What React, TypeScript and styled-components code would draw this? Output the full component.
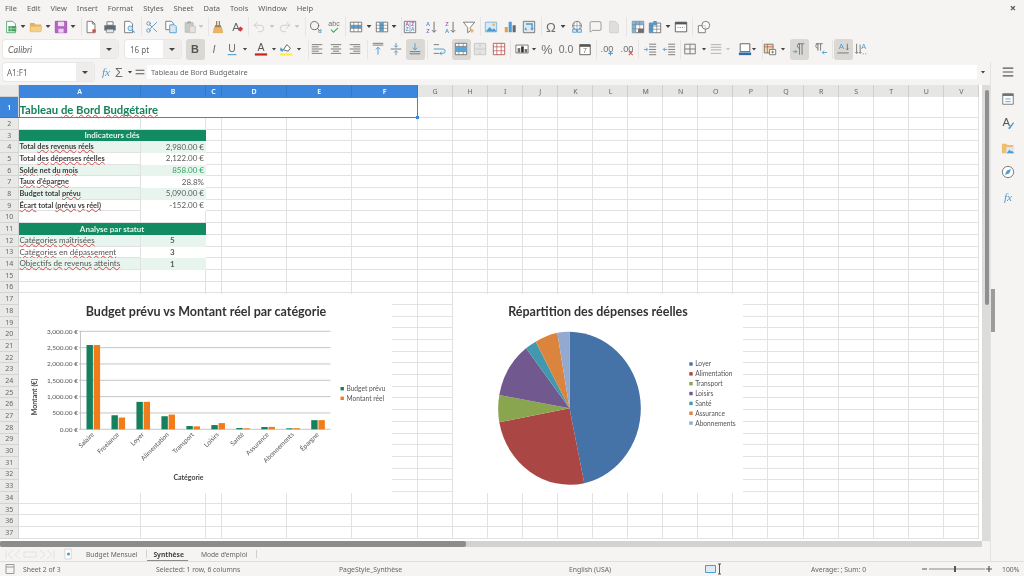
import React from "react";
import styled, { createGlobalStyle } from "styled-components";
import { Scissors, Undo2, Redo2, MessageSquare, Search } from "lucide-react";

const UI = `"Noto Sans", "Open Sans", sans-serif`;
const CELL = `"Lato", "Open Sans", sans-serif`;
const GREY = "#6f6f6f";
const BLUE = "#4f9bd0";

// --- Toolbar icons, all on a 16 unit grid ---

const glyph = (text: string, size: number, color: string, weight = 400, style = "normal", y = 12.5, x = 8) => (
  <text x={x} y={y} textAnchor="middle" fontSize={size} fill={color} fontWeight={weight} fontStyle={style} fontFamily="Liberation Sans, sans-serif">
    {text}
  </text>
);

const lines = (ys: number[], x1: number, x2: number, color = GREY) =>
  ys.map((y, i) => <path key={i} d={`M${x1} ${y}H${x2}`} stroke={color} />);

const ICONS: Record<string, React.ReactNode> = {
  newCalc: (
    <>
      <path d="M3 1.5h7l3 3v10H3z" fill="#fff" stroke="#4ba368" />
      <path d="M5 7h9v6H5z" fill="#3f9d5f" />
      <path d="M8 7v6M5 10h9" stroke="#d5efdc" strokeWidth=".7" />
    </>
  ),
  open: (
    <>
      <path d="M1 3.5h5l1.5 1.5H14v8H1z" fill="#e2b05f" />
      <path d="M1.5 7h13l-1 6.5H1.5z" fill="#f6cf87" stroke="#e6b768" strokeWidth=".6" />
    </>
  ),
  save: (
    <>
      <path d="M1.5 1.5h13v13h-13z" fill="#b566c4" stroke="#a04fb2" />
      <path d="M4.5 2h7v5h-7z" fill="#f0dff3" />
      <path d="M5 10h6v4.5H5z" fill="#e9d4ee" />
    </>
  ),
  template: (
    <>
      <path d="M3.5 1.5h6l3 3v10h-9z" fill="#fff" stroke={GREY} />
      <path d="M9.5 1.5v3h3" stroke={GREY} />
      <circle cx="11.5" cy="12.5" r="2.2" fill="#d9534f" />
    </>
  ),
  print: (
    <>
      <path d="M4.5 2h7v4h-7z" fill="#fff" stroke={GREY} />
      <path d="M1.5 6h13v6h-13z" fill="#5d6b78" />
      <path d="M4 10.5h8v4H4z" fill="#dfe6ec" stroke={GREY} strokeWidth=".7" />
    </>
  ),
  preview: (
    <>
      <path d="M3 1.5h6l3 3v10H3z" fill="#fff" stroke={GREY} />
      <circle cx="9.5" cy="9.5" r="2.7" fill="#cfe6f5" stroke={BLUE} />
      <path d="M11.5 11.5l3 3" stroke={BLUE} strokeWidth="1.3" />
    </>
  ),
  copy: (
    <>
      <path d="M2 1.5h6.5l2 2V11H2z" fill="#fff" stroke={GREY} />
      <path d="M6.5 5.5h5.5l2 2v7H6.5z" fill="#d6e8f5" stroke={BLUE} />
    </>
  ),
  paste: (
    <>
      <path d="M2.5 3h9v11h-9z" fill="#c9c9c7" stroke="#b9b9b7" />
      <path d="M5 1.5h4V4H5z" fill="#a9a9a7" />
      <path d="M7.5 7h6.5v7.5H7.5z" fill="#e3e3e1" stroke="#c4c4c2" />
    </>
  ),
  clone: (
    <>
      <path d="M6.5 1v5M9.5 1v5" stroke="#8a6a3a" strokeWidth="1.2" />
      <path d="M4.5 6h7v2h-7z" fill="#777" />
      <path d="M4 8h8l1.5 6.5h-11z" fill="#eeb461" stroke="#d39745" strokeWidth=".6" />
    </>
  ),
  clear: (
    <>
      {glyph("A", 13, "#5d6b78", 400, "normal", 12, 7)}
      <path d="M9 10l3-2.5 3 2.5-3 3.5z" fill="#d9363e" />
    </>
  ),
  spell: (
    <>
      {glyph("abc", 8, GREY, 400, "normal", 7)}
      <path d="M4.5 11l3 3 5-5" stroke="#45a86e" strokeWidth="1.3" />
    </>
  ),
  rows: (
    <>
      <path d="M1.5 2.5h13v11h-13z" fill="#fff" stroke={GREY} />
      <path d="M1.5 6h13v3.5h-13z" fill="#5aa5d8" />
      <path d="M1.5 6h13M1.5 9.5h13M5.5 2.5v11M10.5 2.5v11" stroke={GREY} strokeWidth=".7" />
    </>
  ),
  cols: (
    <>
      <path d="M1.5 2.5h13v11h-13z" fill="#fff" stroke={GREY} />
      <path d="M5.5 2.5h4v11h-4z" fill="#5aa5d8" />
      <path d="M1.5 6h13M1.5 9.5h13M5.5 2.5v11M9.5 2.5v11" stroke={GREY} strokeWidth=".7" />
    </>
  ),
  sort: (
    <>
      <path d="M1.5 1.5h13v13h-13z" fill="#eef3f7" stroke={GREY} />
      <path d="M8 1.5v13" stroke={GREY} strokeWidth=".6" />
      {glyph("A", 5.5, "#a04fb2", 700, "normal", 7, 4.8)}
      {glyph("Z", 5.5, BLUE, 700, "normal", 13, 4.8)}
      {glyph("Z", 5.5, "#a04fb2", 700, "normal", 7, 11.2)}
      {glyph("A", 5.5, BLUE, 700, "normal", 13, 11.2)}
    </>
  ),
  sortAsc: (
    <>
      {glyph("A", 6.5, BLUE, 700, "normal", 7, 4.5)}
      {glyph("Z", 6.5, "#a06cc0", 700, "normal", 14.5, 4.5)}
      <path d="M11.5 2v12M9 11.5l2.5 2.5 2.5-2.5" stroke={GREY} strokeWidth="1.1" />
    </>
  ),
  sortDesc: (
    <>
      {glyph("Z", 6.5, "#a06cc0", 700, "normal", 7, 4.5)}
      {glyph("A", 6.5, BLUE, 700, "normal", 14.5, 4.5)}
      <path d="M11.5 2v12M9 11.5l2.5 2.5 2.5-2.5" stroke={GREY} strokeWidth="1.1" />
    </>
  ),
  filter: (
    <>
      <path d="M1.5 2.5h13L9.5 8.5v4l-3 2V8.5z" fill="#fff" stroke={GREY} />
      <path d="M9 9l5 3-3 3z" fill="#eeb461" />
    </>
  ),
  image: (
    <>
      <path d="M1.5 2.5h13v11h-13z" fill="#d6e9f6" stroke="#7fb2d6" />
      <path d="M2 13l4.5-5 3 3 2-1.5 3 3.5z" fill={BLUE} />
      <circle cx="11" cy="5.5" r="1.5" fill="#efb45e" />
    </>
  ),
  chart: (
    <>
      <path d="M2 8h3.5v6H2z" fill="#e8a13d" />
      <path d="M6.5 2h3.5v12H6.5z" fill={BLUE} />
      <path d="M11 6h3.5v8H11z" fill="#5d6b78" />
    </>
  ),
  pivot: (
    <>
      <path d="M1.5 1.5h13v13h-13z" fill="#dfe7ee" stroke={GREY} />
      <path d="M4.5 4.5h7v7" stroke={BLUE} strokeWidth="1.6" />
      <path d="M9.5 9.5l2 2.5 2-2.5" fill={BLUE} />
      <path d="M4 8l-1 3 3 1z" fill={BLUE} />
    </>
  ),
  omega: glyph("Ω", 15, GREY, 400, "normal", 13.5),
  link: (
    <>
      <circle cx="8" cy="6.5" r="5" fill="#fff" stroke={GREY} />
      <path d="M3 6.5h10M8 1.5v10M5.5 2.5c-1.5 2.5-1.5 5.5 0 8M10.5 2.5c1.5 2.5 1.5 5.5 0 8" stroke={GREY} strokeWidth=".6" />
      <path d="M3 10.5h4.5v3.5H3zM8.5 10.5H13v3.5H8.5z" fill="#d6e8f5" stroke={BLUE} />
    </>
  ),
  note: <path d="M3 1.5h6.5l3.5 3.5v9.5H3z" fill="#dedede" stroke="#cfcfcf" />,
  freeze: (
    <>
      <path d="M1.5 1.5h13v13h-13z" fill="#fff" stroke={GREY} />
      <path d="M1.5 1.5h13v4h-13zM1.5 5.5h4v9h-4z" fill="#7db6dd" />
      <path d="M1.5 5.5h13M5.5 1.5v13M10 1.5v13M1.5 10h13" stroke={GREY} strokeWidth=".6" />
      <path d="M8 10h6.5v4.5H8z" fill="#6f6f6f" />
    </>
  ),
  split: (
    <>
      <path d="M1.5 3.5h13v11h-13z" fill="#fff" stroke={GREY} />
      <path d="M1.5 3.5h4.5v11H1.5zM6 1h4v5H6z" fill={BLUE} />
      <path d="M1.5 7h13M1.5 10.5h13M10 3.5v11" stroke={GREY} strokeWidth=".7" />
    </>
  ),
  header: (
    <>
      <path d="M1.5 2.5h13v11h-13z" fill="#fff" stroke="#555" />
      <path d="M1.5 2.5h13v2.5h-13z" fill="#555" />
      <path d="M4 8.5h8" stroke={BLUE} strokeDasharray="1.5 1" />
    </>
  ),
  shapes: (
    <>
      <path d="M1.5 6.5h8v8h-8z" fill="#fff" stroke={GREY} />
      <circle cx="10" cy="6" r="4.5" fill="#fff" fillOpacity=".6" stroke={GREY} />
    </>
  ),
  bold: glyph("B", 12.5, "#555", 700),
  italic: glyph("I", 12.5, GREY, 400, "italic"),
  underline: (
    <>
      {glyph("U", 12, GREY, 400, "normal", 11.5)}
      <path d="M3 14.5h10" stroke={BLUE} strokeWidth="1.2" />
    </>
  ),
  fontColor: (
    <>
      {glyph("A", 12, "#555", 400, "normal", 10.5)}
      <path d="M1 13h14v2.5H1z" fill="#c9211e" />
    </>
  ),
  highlight: (
    <>
      <path d="M5 9l4-6 4 4-2.5 3.5z" fill="#fff" stroke="#555" />
      <path d="M2 6l3 3-1 2.5-3-2z" fill={BLUE} />
      <path d="M1 13h14v2.5H1z" fill="#ffee3a" />
    </>
  ),
  alignLeft: <>{lines([3, 8, 13], 2, 14)}{lines([5.5, 10.5], 2, 10)}</>,
  alignCenter: <>{lines([3, 8, 13], 2, 14)}{lines([5.5, 10.5], 4.5, 11.5)}</>,
  alignRight: <>{lines([3, 8, 13], 2, 14)}{lines([5.5, 10.5], 6, 14)}</>,
  alignTop: (
    <>
      {lines([1.5, 3.5], 2, 14)}
      <path d="M8 14.5V6M5.5 8.5L8 6l2.5 2.5" stroke={BLUE} strokeWidth="1.1" />
    </>
  ),
  alignMiddle: (
    <>
      {lines([8], 2, 14)}
      <path d="M8 1v5M6 4l2 2 2-2M8 15v-5M6 12l2-2 2 2" stroke={BLUE} strokeWidth="1.1" />
    </>
  ),
  alignBottom: (
    <>
      {lines([11, 13.5], 2, 14)}
      <path d="M8 1.5V9M5.5 6.5L8 9l2.5-2.5" stroke={BLUE} strokeWidth="1.1" />
    </>
  ),
  wrap: (
    <>
      {lines([3, 13], 2, 8)}
      <path d="M2 8h10.5a2.2 2.2 0 010 5H9M11 11l-2 2 2 2" stroke={BLUE} strokeWidth="1.1" />
    </>
  ),
  merge: (
    <>
      <path d="M1.5 1.5h13v13h-13z" fill="#fff" stroke={GREY} />
      <path d="M1.5 5h13v6h-13z" fill="#5aa5d8" />
      <path d="M1.5 5h13M1.5 11h13M5.5 1.5V5M10.5 1.5V5M5.5 11v3.5M10.5 11v3.5" stroke={GREY} strokeWidth=".7" />
    </>
  ),
  mergeGrey: (
    <>
      <path d="M1.5 1.5h13v13h-13z" fill="#e4e4e2" stroke="#c4c4c2" />
      <path d="M1.5 8h13M8 1.5v4M8 11v3.5" stroke="#c4c4c2" />
    </>
  ),
  unmerge: (
    <>
      <path d="M1.5 1.5h13v13h-13z" fill="#fff" stroke="#b5534c" />
      <path d="M1.5 5.5h13M1.5 10h13M5.5 1.5v13M10.5 1.5v13" stroke="#b5534c" strokeWidth=".8" />
    </>
  ),
  currency: (
    <>
      <path d="M1 3.5h14v9H1z" fill="#fff" stroke={GREY} />
      <path d="M3 7h3v5H3z" fill={GREY} />
      <path d="M7 5h3v7H7z" fill="#333" />
      <path d="M11 8h3v4h-3z" fill={GREY} />
    </>
  ),
  percent: glyph("%", 14.5, GREY, 400, "normal", 13.5),
  number: glyph("0.0", 12, GREY, 400, "normal", 12.5),
  date: (
    <>
      <path d="M2 3h12v11.5H2z" fill="#fff" stroke="#555" />
      <path d="M2 3h12v2.5H2z" fill="#555" />
      {glyph("7", 8, GREY, 400, "normal", 13)}
    </>
  ),
  addDec: (
    <>
      {glyph(".00", 10.5, GREY, 400, "normal", 11)}
      <path d="M12 10.5v5M9.5 13h5" stroke={BLUE} strokeWidth="1.2" />
    </>
  ),
  delDec: (
    <>
      {glyph(".00", 10.5, GREY, 400, "normal", 11)}
      <path d="M10 10.5l4.5 4.5M14.5 10.5L10 15" stroke="#d9534f" strokeWidth="1.2" />
    </>
  ),
  indentMore: (
    <>
      {lines([2.5, 5.5, 8.5, 11.5, 14.5], 7, 15)}
      <path d="M1 8.5h4M3.5 6.5l2 2-2 2" stroke={BLUE} />
    </>
  ),
  indentLess: (
    <>
      {lines([2.5, 5.5, 8.5, 11.5, 14.5], 7, 15)}
      <path d="M6 8.5H1.5M3.5 6.5l-2 2 2 2" stroke={BLUE} />
    </>
  ),
  borders: <path d="M2 2.5h12v11H2zM8 2.5v11M2 8h12" stroke={GREY} />,
  borderStyle: <>{lines([3, 6, 9, 13], 2, 14, "#a8a8a6")}</>,
  borderColor: (
    <>
      <path d="M2.5 2h11v9h-11z" fill="#fff" stroke="#555" />
      <path d="M1 12h14v3H1z" fill="#2f6ba8" />
    </>
  ),
  conditional: (
    <>
      <path d="M1.5 2.5h10v10h-10z" fill="#f3d9b0" stroke={GREY} />
      <path d="M1.5 5.5h10M5 2.5v10" stroke="#b5534c" strokeWidth=".8" />
      <path d="M7.5 8.5h7v6h-7z" fill="#fff" stroke={GREY} />
      <path d="M9.5 11.5h3M11 10v3" stroke={GREY} />
    </>
  ),
  ltr: (
    <>
      <path d="M7 2h7M8.5 2v12.5M11.5 2v12.5M8.5 2C5.5 2 5 7 8.5 7" stroke={GREY} />
      <path d="M1 11h4.5M3.5 9l2 2-2 2" stroke={BLUE} />
    </>
  ),
  rtl: (
    <>
      <path d="M2 2h8M4.5 2v8M7.5 2v8M4.5 2C1.5 2 1 7 4.5 7" stroke={GREY} />
      <path d="M15 12H9.5M11.5 10l-2 2 2 2" stroke={BLUE} />
    </>
  ),
  textHoriz: (
    <>
      {glyph("A", 9, BLUE, 400, "normal", 8, 6)}
      <path d="M13 2v7M11.5 7.5l1.5 1.5 1.5-1.5M1.5 12.5h13" stroke={GREY} />
    </>
  ),
  textVert: (
    <>
      {glyph("A", 8.5, BLUE, 400, "normal", 8, 11)}
      <path d="M3 2v11M1.5 11.5l1.5 1.5 1.5-1.5M7 3v10M5.5 11.5L7 13l1.5-1.5" stroke={GREY} />
      <path d="M10 13.5h1M13 13.5h1" stroke={GREY} />
    </>
  ),
  fx: (
    <text x="8" y="12.5" textAnchor="middle" fontSize="13" fontStyle="italic" fill={BLUE} fontFamily="Liberation Serif, serif">
      fx
    </text>
  ),
  sum: glyph("Σ", 14.5, GREY, 400, "normal", 13.5),
  equals: <path d="M3 6h10M3 10h10" stroke="#555" strokeWidth="1.4" />,
  cut: <Scissors size={16} color="#5a93bd" strokeWidth={1.5} />,
  undo: <Undo2 size={16} color="#c6c6c4" strokeWidth={1.4} />,
  redo: <Redo2 size={16} color="#c6c6c4" strokeWidth={1.4} />,
  find: (
    <>
      <Search x={0} y={0} size={14} color="#555" strokeWidth={1.6} />
      {glyph("d", 7, BLUE, 700, "normal", 15, 12.5)}
    </>
  ),
  comment: <MessageSquare size={15} color={GREY} strokeWidth={1.2} />,
};

type ToolItem = [name: string, center: number, active?: boolean];

const TOP_TOOLS: ToolItem[] = [
  ["newCalc", 11], ["caret", 23], ["open", 36], ["caret", 48], ["save", 61], ["caret", 73], ["sep", 81],
  ["template", 91], ["print", 110], ["preview", 129], ["sep", 141],
  ["cut", 152], ["copy", 171], ["paste", 190], ["caretOff", 201], ["sep", 208],
  ["clone", 218], ["clear", 237], ["sep", 248],
  ["undo", 259], ["caretOff", 272], ["redo", 285], ["caretOff", 297], ["sep", 305],
  ["find", 316], ["spell", 334], ["sep", 345],
  ["rows", 356], ["caret", 369], ["cols", 382], ["caret", 394], ["sep", 401],
  ["sort", 410], ["sortAsc", 431], ["sortDesc", 450], ["filter", 469], ["sep", 480],
  ["image", 491], ["chart", 510], ["pivot", 529], ["sep", 541],
  ["omega", 551], ["caret", 563], ["link", 577], ["comment", 596], ["note", 614], ["sep", 626],
  ["freeze", 638], ["split", 655], ["caret", 668], ["header", 681], ["sep", 692],
  ["shapes", 704],
];

const FORMAT_TOOLS: ToolItem[] = [
  ["bold", 195, true], ["italic", 214], ["underline", 232], ["caret", 245],
  ["fontColor", 261], ["caret", 274], ["highlight", 286], ["caret", 299], ["sep", 308],
  ["alignLeft", 317], ["alignCenter", 336], ["alignRight", 355], ["sep", 367],
  ["alignTop", 378], ["alignMiddle", 396], ["alignBottom", 415, true], ["sep", 427],
  ["wrap", 439], ["merge", 461, true], ["mergeGrey", 480], ["unmerge", 499], ["sep", 510],
  ["currency", 522], ["caret", 534], ["percent", 547], ["number", 566], ["date", 585], ["sep", 596],
  ["addDec", 607], ["delDec", 627], ["sep", 638],
  ["indentMore", 650], ["indentLess", 669], ["sep", 680],
  ["borders", 690], ["caret", 704], ["borderStyle", 716], ["caretOff", 728], ["borderColor", 745], ["caret", 754], ["sep", 762],
  ["conditional", 770], ["caret", 783], ["sep", 791],
  ["ltr", 799, true], ["rtl", 821], ["sep", 832],
  ["textHoriz", 843, true], ["textVert", 861],
];

const itemWidth = (name: string) => (name === "sep" ? 1 : name.startsWith("caret") ? 5 : 19);

// each item sits at its center, the margin is what is left after the previous one
const Tools = ({ items, from = 0 }: { items: ToolItem[]; from?: number }) => {
  let right = from;
  return (
    <>
      {items.map(([name, center, active], i) => {
        const w = itemWidth(name);
        const gap = center - w / 2 - right;
        right = center + w / 2;
        if (name === "sep") return <ToolSep key={i} $gap={gap} />;
        if (name.startsWith("caret")) return <Caret key={i} $gap={gap} $off={name === "caretOff"} />;
        return (
          <Tool key={i} $gap={gap} $active={active}>
            <ToolSvg viewBox="0 0 16 16" fill="none">
              {ICONS[name]}
            </ToolSvg>
          </Tool>
        );
      })}
    </>
  );
};

// --- Sheet data ---

const COLUMNS = "ABCDEFGHIJKLMNOPQRSTUV".split("");
const ROW_COUNT = 37;

type KeyRow = { label: string; value: string; shaded?: boolean; strong?: boolean; center?: boolean; positive?: boolean };

const KEY_ROWS: Record<number, KeyRow> = {
  4: { label: "Total ~des ~revenus ~réels", value: "2,980.00 €", shaded: true, strong: true },
  5: { label: "Total ~des ~dépenses ~réelles", value: "2,122.00 €", strong: true },
  6: { label: "~Solde net ~du ~mois", value: "858.00 €", shaded: true, strong: true, positive: true },
  7: { label: "~Taux ~d'épargne", value: "28.8%", strong: true },
  8: { label: "Budget total ~prévu", value: "5,090.00 €", shaded: true, strong: true },
  9: { label: "~Écart total ~(prévu ~vs ~réel)", value: "-152.00 €", strong: true },
  12: { label: "~Catégories ~maîtrisées", value: "5", shaded: true, center: true },
  13: { label: "~Catégories en ~dépassement", value: "3", center: true },
  14: { label: "~Objectifs ~de ~revenus ~atteints", value: "1", shaded: true, center: true },
};

const BANDS: Record<number, string> = { 3: "Indicateurs clés", 11: "Analyse par statut" };

// words with a ~ get the red spell check line
const marked = (text: string) =>
  text.split(" ").map((word, i) => (
    <React.Fragment key={i}>
      {i > 0 && " "}
      {word.startsWith("~") ? <Misspelled>{word.slice(1)}</Misspelled> : word}
    </React.Fragment>
  ));

const renderRow = (row: number) => {
  const head = (
    <RowHead key={`h${row}`} $selected={row === 1}>
      {row}
    </RowHead>
  );
  const rest = (from: number) =>
    COLUMNS.slice(from).map((c) => <Cell key={`${c}${row}`} />);

  if (row === 1) {
    return [head, <TitleCell key="title">{marked("Tableau ~de ~Bord ~Budgétaire")}</TitleCell>, ...rest(6)];
  }
  if (BANDS[row]) {
    return [head, <BandCell key={`b${row}`}>{BANDS[row]}</BandCell>, ...rest(2)];
  }
  const data = KEY_ROWS[row];
  if (data) {
    return [
      head,
      <LabelCell key={`a${row}`} $shaded={data.shaded} $strong={data.strong}>
        {marked(data.label)}
      </LabelCell>,
      <ValueCell key={`v${row}`} $shaded={data.shaded} $center={data.center} $positive={data.positive}>
        {data.value}
      </ValueCell>,
      ...rest(2),
    ];
  }
  return [head, ...rest(0)];
};

// --- Chart data ---

const BAR_DATA: [string, number, number][] = [
  ["Salaire", 2580, 2580],
  ["Freelance", 430, 360],
  ["Loyer", 840, 840],
  ["Alimentation", 400, 450],
  ["Transport", 100, 90],
  ["Loisirs", 130, 190],
  ["Santé", 40, 30],
  ["Assurance", 70, 75],
  ["Abonnements", 30, 35],
  ["Épargne", 280, 280],
];

const Y_TICKS = ["3,000.00 €", "2,500.00 €", "2,000.00 €", "1,500.00 €", "1,000.00 €", "500.00 €", "0.00 €"];
const BAR_BASE = 429.3;
const BAR_SCALE = 98 / 3000;

const PIE_CENTER = "569.5 408.3";
const PIE_SLICES: [string, string, string, string][] = [
  ["Loyer", "#4572a7", "569.5 331.7", "584.3 483.3"],
  ["Alimentation", "#aa4643", "584.3 483.3", "499.3 422.3"],
  ["Transport", "#89a54e", "499.3 422.3", "499.3 395"],
  ["Loisirs", "#71588f", "499.3 395", "526 348.3"],
  ["Santé", "#4198af", "526 348.3", "535.7 341.7"],
  ["Assurance", "#db843d", "535.7 341.7", "557.3 332.7"],
  ["Abonnements", "#93a9cf", "557.3 332.7", "569.5 331.7"],
];

const BarChart = () => (
  <ChartSvg viewBox="18.5 294 373.5 199">
    <ChartTitle x="205.5" y="316">Budget prévu vs Montant réel par catégorie</ChartTitle>
    {Y_TICKS.map((t, i) => {
      const y = 331.3 + (i * 98) / 6;
      return (
        <g key={t}>
          <path d={`M78.5 ${y}H330`} stroke="#b8b8b8" strokeWidth=".8" />
          <AxisText x="77.5" y={y + 2.4} textAnchor="end">{t}</AxisText>
        </g>
      );
    })}
    <path d="M80 331v98.5" stroke="#b8b8b8" strokeWidth=".8" />
    {BAR_DATA.map(([name, planned, real], i) => {
      const x = 86 + i * 24.97;
      return (
        <g key={name}>
          <rect x={x} y={BAR_BASE - planned * BAR_SCALE} width="6.4" height={planned * BAR_SCALE} fill="#14805e" />
          <rect x={x + 7.2} y={BAR_BASE - real * BAR_SCALE} width="6.4" height={real * BAR_SCALE} fill="#f07c1a" />
          <AxisText x={x + 8} y="435" textAnchor="end" transform={`rotate(-45 ${x + 8} 435)`}>{name}</AxisText>
        </g>
      );
    })}
    <AxisTitle x="36" y="397" textAnchor="middle" transform="rotate(-90 36 397)">Montant (€)</AxisTitle>
    <AxisTitle x="188" y="480" textAnchor="middle">Catégorie</AxisTitle>
    <rect x="340" y="387" width="3.4" height="3.4" fill="#14805e" />
    <LegendText x="346" y="391.2">Budget prévu</LegendText>
    <rect x="340" y="396.6" width="3.4" height="3.4" fill="#f07c1a" />
    <LegendText x="346" y="400.8">Montant réel</LegendText>
  </ChartSvg>
);

const PieChart = () => (
  <ChartSvg viewBox="453 294 290 199">
    <ChartTitle x="598" y="316">Répartition des dépenses réelles</ChartTitle>
    {PIE_SLICES.map(([name, color, start, end]) => (
      <path key={name} d={`M${PIE_CENTER}L${start}A72 76.7 0 0 1 ${end}Z`} fill={color} />
    ))}
    {PIE_SLICES.map(([name, color], i) => (
      <g key={name}>
        <rect x="689.3" y={362.3 + i * 9.85} width="3.4" height="3.4" fill={color} />
        <LegendText x="695.2" y={366.4 + i * 9.85}>{name}</LegendText>
      </g>
    ))}
  </ChartSvg>
);

const MENU = ["File", "Edit", "View", "Insert", "Format", "Styles", "Sheet", "Data", "Tools", "Window", "Help"];

const App = () => (
  <>
    <GlobalStyle />
    <Window>
      <MenuBar>
        {MENU.map((m) => (
          <span key={m}>{m}</span>
        ))}
        <CloseMark>×</CloseMark>
      </MenuBar>

      <ToolRow>
        <Tools items={TOP_TOOLS} />
      </ToolRow>

      <FormatRow>
        <FontBox>
          <FontName>Calibri</FontName>
          <BoxArrow />
        </FontBox>
        <SizeBox>
          <SizeValue>16 pt</SizeValue>
          <BoxArrow />
        </SizeBox>
        <Tools items={FORMAT_TOOLS} from={181} />
      </FormatRow>

      <Body>
        <Workspace>
          <FormulaBar>
            <NameBox>
              <NameValue>A1:F1</NameValue>
              <BoxArrow />
            </NameBox>
            <Tools items={[["fx", 106], ["sum", 119], ["caret", 130], ["equals", 140]]} from={94} />
            <FormulaInput>Tableau de Bord Budgétaire</FormulaInput>
            <Caret $gap={3.5} />
          </FormulaBar>

          <SheetRow>
            <Sheet>
              <Grid>
                <Corner />
                {COLUMNS.map((c, i) => (
                  <ColHead key={c} $selected={i < 6}>
                    {c}
                  </ColHead>
                ))}
                {Array.from({ length: ROW_COUNT }, (_, i) => renderRow(i + 1))}
              </Grid>
              <BarPanel>
                <BarChart />
              </BarPanel>
              <PiePanel>
                <PieChart />
              </PiePanel>
            </Sheet>
            <VScroll>
              <VThumb />
            </VScroll>
          </SheetRow>

          <HScroll>
            <HThumb />
          </HScroll>

          <TabBar>
            <TabNav viewBox="0 0 52 11" fill="none" stroke="#e2e2e0">
              <path d="M2 1v9M9 1L4 5.5 9 10M16 1l-5 4.5 5 4.5M20 3h12v5H20zM36 1l5 4.5-5 4.5M43 1l5 4.5-5 4.5M50 1v9" />
            </TabNav>
            <NewSheet viewBox="0 0 10 12" fill="none">
              <path d="M1 .5h7v11H1z" fill="#fff" stroke="#d4d4d2" />
              <circle cx="5" cy="6" r="1.7" fill={BLUE} />
            </NewSheet>
            <Tab>Budget Mensuel</Tab>
            <TabDivider />
            <Tab $active>Synthèse</Tab>
            <Tab>Mode d'emploi</Tab>
            <TabDivider />
          </TabBar>
        </Workspace>

        <Sidebar>
          <SideTool viewBox="0 0 16 16" fill="none">
            <path d="M2 3.5h12M2 8h12M2 12.5h12" stroke="#555" strokeWidth="1.4" />
          </SideTool>
          <SideTool viewBox="0 0 16 16" fill="none">
            <path d="M2 2h12v12H2z" fill="#fff" stroke={GREY} />
            <path d="M2 2h12v2.5H2z" fill={GREY} />
            <path d="M5 8h6M5 11h6" stroke={BLUE} />
          </SideTool>
          <SideTool viewBox="0 0 16 16" fill="none">
            {glyph("A", 13, "#555", 400, "normal", 11, 6)}
            <path d="M8 14l6-7 1 1-5 7z" fill={BLUE} />
          </SideTool>
          <SideTool viewBox="0 0 16 16" fill="none">
            <path d="M1 3h5l1.5 1.5H14V14H1z" fill="#efbd6f" />
            <path d="M6 7h9v7.5H6z" fill="#d6e9f6" />
            <path d="M6.5 14l3-4 2 2 1-1 2.5 3z" fill={BLUE} />
          </SideTool>
          <SideTool viewBox="0 0 16 16" fill="none">
            <circle cx="8" cy="8" r="6.5" fill="#fff" stroke={GREY} />
            <path d="M11.5 4.5L9.5 9.5l-5 2 2-5z" fill={BLUE} />
          </SideTool>
          <SideTool viewBox="0 0 16 16" fill="none">
            {ICONS.fx}
          </SideTool>
          <SideHandle />
        </Sidebar>
      </Body>

      <StatusBar>
        <StatusCell $w={23}>
          <StatusDoc viewBox="0 0 10 10" fill="none">
            <path d="M1 .5h8v9H1zM1 3h8" stroke="#9a9a98" />
          </StatusDoc>
        </StatusCell>
        <StatusCell $w={133}>Sheet 2 of 3</StatusCell>
        <StatusCell $w={183}>Selected: 1 row, 6 columns</StatusCell>
        <StatusCell $w={230}>PageStyle_Synthèse</StatusCell>
        <StatusCell $w={136}>English (USA)</StatusCell>
        <StatusCell $w={106}>
          <ModeMark viewBox="0 0 22 12" fill="none">
            <path d="M.5 2.5h10v7H.5z" fill="#dcebf5" stroke={BLUE} />
            <path d="M13 1h3M14.5 1v10M13 11h3" stroke="#555" />
          </ModeMark>
        </StatusCell>
        <StatusCell $w={111}>Average: ; Sum: 0</StatusCell>
        <ZoomControl viewBox="0 0 73 10" fill="none">
          <path d="M0 5h5M64 5h6M67 2v6" stroke="#555" strokeWidth="1.2" />
          <path d="M7 5h56" stroke="#8a8a88" />
          <path d="M32 2h2v6h-2z" fill="#555" />
        </ZoomControl>
        <ZoomValue>100%</ZoomValue>
      </StatusBar>
    </Window>
  </>
);

// --- Styled Components ---

const GlobalStyle = createGlobalStyle`
  html, body {
    margin: 0;
    padding: 0;
    background: #f5f4f2;
  }
`;

const Window = styled.div`
  width: 1024px;
  height: 576px;
  display: flex;
  flex-direction: column;
  overflow: hidden;
  background: #f5f4f2;
  color: #555;
  font-family: ${UI};
  filter: blur(0.35px);
`;

const MenuBar = styled.div`
  height: 15px;
  flex: none;
  display: flex;
  align-items: center;
  gap: 10px;
  padding: 0 5px;
  font-size: 7.5px;
  color: #5c5c5c;
`;

const CloseMark = styled.span`
  margin-left: auto;
  margin-right: 3px;
  font-size: 11px;
  font-weight: 700;
  color: #555;
`;

const ToolRow = styled.div`
  height: 23px;
  flex: none;
  display: flex;
  align-items: center;
`;

const FormatRow = styled(ToolRow)`
  height: 24px;
  padding-bottom: 2px;
  box-sizing: border-box;
`;

const Tool = styled.div<{ $gap: number; $active?: boolean }>`
  width: 19px;
  height: 21px;
  flex: none;
  margin-left: ${(p) => p.$gap}px;
  display: flex;
  align-items: center;
  justify-content: center;
  border-radius: 3px;
  background: ${(p) => (p.$active ? "#d9d8d5" : "transparent")};
`;

const ToolSvg = styled.svg`
  width: 14px;
  height: 14px;
  overflow: visible;
`;

const ToolSep = styled.div<{ $gap: number }>`
  width: 1px;
  height: 19px;
  flex: none;
  margin-left: ${(p) => p.$gap}px;
  background: #e6e5e3;
`;

const Caret = styled.div<{ $gap: number; $off?: boolean }>`
  width: 5px;
  height: 3px;
  flex: none;
  margin-left: ${(p) => p.$gap}px;
  background: ${(p) => (p.$off ? "#c6c6c4" : "#444")};
  clip-path: polygon(0 0, 100% 0, 50% 100%);
`;

const FieldBox = styled.div`
  height: 18px;
  flex: none;
  display: flex;
  align-items: stretch;
  background: #fff;
  border-radius: 3px;
  box-shadow: 0 0 0 1px #e8e7e5;
  font-size: 8px;
  color: #666;
`;

const FontBox = styled(FieldBox)`
  width: 115px;
  margin-left: 3px;
`;

const SizeBox = styled(FieldBox)`
  width: 56px;
  margin-left: 7px;
`;

const NameBox = styled(FieldBox)`
  width: 91px;
  margin-left: 3px;
`;

const FontName = styled.span`
  flex: 1;
  padding-left: 5px;
  align-self: center;
  font-style: italic;
  font-family: "Lato", sans-serif;
  font-size: 9px;
`;

const SizeValue = styled.span`
  flex: 1;
  padding-left: 5px;
  align-self: center;
`;

const NameValue = styled(SizeValue)`
  padding-left: 4px;
`;

const BoxArrow = styled.div`
  width: 18px;
  flex: none;
  background: #eeedeb;
  border-radius: 0 3px 3px 0;
  display: flex;
  align-items: center;
  justify-content: center;

  &::after {
    content: "";
    border-top: 3.5px solid #444;
    border-left: 3.5px solid transparent;
    border-right: 3.5px solid transparent;
  }
`;

const Body = styled.div`
  flex: 1;
  min-height: 0;
  display: flex;
`;

const Workspace = styled.div`
  width: 990px;
  flex: none;
  display: flex;
  flex-direction: column;
`;

const FormulaBar = styled.div`
  height: 23px;
  flex: none;
  display: flex;
  align-items: center;
  padding-bottom: 3px;
  box-sizing: border-box;
`;

const FormulaInput = styled.div`
  width: 830px;
  height: 14px;
  flex: none;
  margin-left: -2.5px;
  padding-left: 4px;
  box-sizing: border-box;
  display: flex;
  align-items: center;
  background: #fff;
  font-size: 7.4px;
  color: #666;
`;

const SheetRow = styled.div`
  height: 456px;
  flex: none;
  display: flex;
`;

const Sheet = styled.div`
  position: relative;
  width: 982px;
  flex: none;
  overflow: hidden;
  background: #fff;
`;

const Grid = styled.div`
  display: grid;
  grid-template-columns: 18.5px 122px 65px 16px 65px 65.5px 65.5px repeat(16, 35.1px);
  grid-template-rows: 12.3px 20.7px repeat(36, 11.7px);
`;

const Corner = styled.div`
  background: #e9e9e7;
  border-right: 1px solid #d0d0ce;
  border-bottom: 1px solid #d0d0ce;
`;

const ColHead = styled.div<{ $selected?: boolean }>`
  display: flex;
  align-items: center;
  justify-content: center;
  font-size: 7px;
  font-family: ${UI};
  background: ${(p) => (p.$selected ? "#3d86de" : "#e6e6e4")};
  color: ${(p) => (p.$selected ? "#fff" : "#666")};
  font-weight: ${(p) => (p.$selected ? 600 : 400)};
  box-shadow: inset -1px 0 0 ${(p) => (p.$selected ? "#3578c8" : "#cfcfcd")};
`;

const RowHead = styled.div<{ $selected?: boolean }>`
  display: flex;
  align-items: center;
  justify-content: center;
  padding-bottom: 1px;
  box-sizing: border-box;
  font-size: 7px;
  font-family: ${UI};
  background: ${(p) => (p.$selected ? "#3d86de" : "#e9e9e7")};
  color: ${(p) => (p.$selected ? "#fff" : "#666")};
  font-weight: ${(p) => (p.$selected ? 600 : 400)};
  box-shadow: inset 0 -1px 0 ${(p) => (p.$selected ? "#3578c8" : "#d4d4d2")}, inset -1px 0 0 #d4d4d2;
`;

const Cell = styled.div`
  min-width: 0;
  box-shadow: inset -1px -1px 0 #e2e2e2;
`;

const TitleCell = styled.div`
  position: relative;
  grid-column: span 6;
  white-space: pre;
  box-sizing: border-box;
  border: 1px solid #3d86de;
  font-family: ${CELL};
  font-size: 11.3px;
  line-height: 23px;
  font-weight: 700;
  color: #14805e;

  &::after {
    content: "";
    position: absolute;
    right: -2px;
    bottom: -2px;
    width: 3px;
    height: 3px;
    background: #3d86de;
  }
`;

const BandCell = styled.div`
  grid-column: span 2;
  display: flex;
  align-items: center;
  justify-content: center;
  padding-bottom: 1px;
  background: #128a62;
  color: #e4f5ec;
  font-family: ${CELL};
  font-size: 8px;
  font-weight: 700;
`;

const LabelCell = styled.div<{ $shaded?: boolean; $strong?: boolean }>`
  padding-left: 1px;
  white-space: pre;
  line-height: 11.5px;
  font-family: ${CELL};
  font-size: ${(p) => (p.$strong ? "7.4px" : "8px")};
  font-weight: ${(p) => (p.$strong ? 700 : 400)};
  color: ${(p) => (p.$strong ? "#3c3c3c" : "#555")};
  background: ${(p) => (p.$shaded ? "#e8f4ee" : "#fff")};
  box-shadow: inset -1px -1px 0 #e2e2e2;
`;

const ValueCell = styled.div<{ $shaded?: boolean; $center?: boolean; $positive?: boolean }>`
  display: flex;
  align-items: center;
  justify-content: ${(p) => (p.$center ? "center" : "flex-end")};
  padding: 0 1.5px 1px 0;
  font-family: ${CELL};
  font-size: 8px;
  font-weight: ${(p) => (p.$center ? 700 : 400)};
  color: ${(p) => (p.$positive ? "#2ea864" : "#5c5c5c")};
  background: ${(p) => (p.$shaded ? "#e8f4ee" : "#fff")};
`;

const Misspelled = styled.span`
  text-decoration: underline wavy #d6494b;
  text-decoration-thickness: 0.6px;
  text-decoration-skip-ink: none;
  text-underline-offset: 0.2px;
`;

const ChartPanel = styled.div`
  position: absolute;
  top: 209px;
  height: 199px;
  background: #fff;
`;

const BarPanel = styled(ChartPanel)`
  left: 18.5px;
  width: 373.5px;
`;

const PiePanel = styled(ChartPanel)`
  left: 453px;
  width: 290px;
`;

const ChartSvg = styled.svg`
  display: block;
  width: 100%;
  height: 100%;
`;

const ChartTitle = styled.text`
  font-family: "Lato", sans-serif;
  font-size: 12.5px;
  font-weight: 700;
  fill: #333;
  text-anchor: middle;
`;

const AxisText = styled.text`
  font-family: "Lato", sans-serif;
  font-size: 6.5px;
  fill: #555;
`;

const AxisTitle = styled(AxisText)`
  font-weight: 700;
  font-size: 7px;
  fill: #444;
`;

const LegendText = styled(AxisText)`
  font-size: 6.6px;
`;

const VScroll = styled.div`
  flex: 1;
  background: #dcdcda;
  padding: 5px 1px 0 3px;
`;

const VThumb = styled.div`
  height: 215px;
  border-radius: 2px;
  background: #8f8f8f;
`;

const HScroll = styled.div`
  width: 982px;
  height: 6px;
  flex: none;
  background: #d2d2d0;
`;

const HThumb = styled.div`
  width: 466px;
  height: 100%;
  border-radius: 2px;
  background: #8c8c8c;
`;

const TabBar = styled.div`
  flex: 1;
  display: flex;
  align-items: center;
  font-size: 6.7px;
  color: #666;
`;

const TabNav = styled.svg`
  width: 52px;
  height: 11px;
  margin-left: 4px;
  flex: none;
`;

const NewSheet = styled.svg`
  width: 9px;
  height: 12px;
  margin-left: 8px;
  flex: none;
`;

const Tab = styled.div<{ $active?: boolean }>`
  height: 100%;
  box-sizing: border-box;
  display: flex;
  align-items: center;
  padding: ${(p) => (p.$active ? "1.5px 4px 0 6px" : "0 0 0 13px")};
  font-weight: ${(p) => (p.$active ? 700 : 400)};
  color: ${(p) => (p.$active ? "#444" : "#666")};
  border-bottom: ${(p) => (p.$active ? "1.5px solid #8a8a88" : "none")};
`;

const TabDivider = styled.div`
  width: 1px;
  height: 8px;
  margin-left: 9px;
  background: #d0d0ce;
`;

const Sidebar = styled.div`
  position: relative;
  flex: 1;
  display: flex;
  flex-direction: column;
  align-items: center;
  gap: 10.5px;
  padding-top: 2.5px;
  border-left: 1px solid #e4e3e1;
`;

const SideTool = styled.svg`
  width: 14px;
  height: 14px;
  flex: none;
  overflow: visible;

  &:first-child {
    margin-bottom: 2.5px;
  }
`;

const SideHandle = styled.div`
  position: absolute;
  left: 0;
  top: 227px;
  width: 3.5px;
  height: 43px;
  background: #9c9c9a;
`;

const StatusBar = styled.div`
  height: 15px;
  flex: none;
  display: flex;
  align-items: center;
  border-top: 1px solid #e0dfdd;
  box-sizing: border-box;
  font-size: 6.8px;
  color: #666;
`;

const StatusCell = styled.div<{ $w: number }>`
  width: ${(p) => p.$w}px;
  flex: none;
  display: flex;
  align-items: center;
  white-space: nowrap;
`;

const StatusDoc = styled.svg`
  width: 10px;
  height: 10px;
  margin-left: 5px;
`;

const ModeMark = styled.svg`
  width: 22px;
  height: 12px;
`;

const ZoomControl = styled.svg`
  width: 73px;
  height: 10px;
  flex: none;
  overflow: visible;
`;

const ZoomValue = styled.span`
  margin-left: 7px;
`;

export default App;
